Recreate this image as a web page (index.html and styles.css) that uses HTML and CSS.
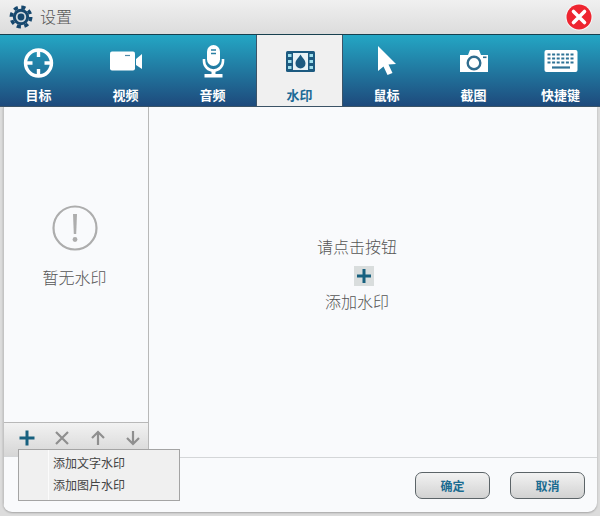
FILE: index.html
```html
<!DOCTYPE html>
<html lang="zh-CN">
<head>
    <meta charset="UTF-8">
    <meta name="viewport" content="width=device-width, initial-scale=1.0">
    <title>设置</title>
    <link rel="stylesheet" href="styles.css">
</head>
<body>

<header class="titlebar">
    <svg class="gear" width="26" height="26" viewBox="0 0 26 26">
        <circle cx="13" cy="13" r="9.8" fill="none" stroke="#17486e" stroke-width="3.4" stroke-dasharray="4.2 3.5"/>
        <circle cx="13" cy="13" r="8.2" fill="#17486e"/>
        <circle cx="13" cy="13" r="5.2" fill="#cfd8de"/>
        <circle cx="13" cy="13" r="3.4" fill="#17486e"/>
    </svg>
    <span class="title">设置</span>
    <svg class="close" width="28" height="28" viewBox="0 0 28 28">
        <circle cx="14" cy="14" r="13.5" fill="#f6f6f6"/>
        <circle cx="14" cy="14" r="12.5" fill="#ee2530"/>
        <path d="M8.5 8.5 L19.5 19.5 M19.5 8.5 L8.5 19.5" stroke="#fff" stroke-width="3.6" stroke-linecap="round"/>
    </svg>
</header>

<nav class="tabs">
    <div class="tab">
        <svg width="40" height="36" viewBox="0 0 40 36">
            <circle cx="19.5" cy="18" r="13" fill="none" stroke="#fff" stroke-width="3.4"/>
            <path d="M19.5 5 V12 M19.5 24 V31 M6.5 18 H13.5 M25.5 18 H32.5" stroke="#fff" stroke-width="3.4"/>
        </svg>
        <span>目标</span>
    </div>
    <div class="tab">
        <svg width="40" height="36" viewBox="0 0 40 36">
            <path d="M6 6.5 H27 Q29 6.5 29 8.5 V23.5 Q29 25.5 27 25.5 H6 Q4 25.5 4 23.5 V8.5 Q4 6.5 6 6.5 Z" fill="#fff"/>
            <path d="M19 10.5 H24" stroke="#4f8aa8" stroke-width="1.2"/>
            <path d="M30 14 L36 9 V24 L30 20 Z" fill="#fff"/>
        </svg>
        <span>视频</span>
    </div>
    <div class="tab">
        <svg width="40" height="36" viewBox="0 0 40 36">
            <rect x="14" y="0" width="13" height="21" rx="6.5" fill="#fff"/>
            <path d="M18 5 H23 M18 8.5 H23" stroke="#2a7fa3" stroke-width="1.4"/>
            <path d="M11 14 V16 A9.5 9.5 0 0 0 30 16 V14" fill="none" stroke="#fff" stroke-width="2.6"/>
            <path d="M20.5 26 V30" stroke="#fff" stroke-width="4"/>
            <rect x="11.5" y="29" width="18" height="3.5" fill="#fff"/>
        </svg>
        <span>音频</span>
    </div>
    <div class="tab active">
        <svg width="40" height="36" viewBox="0 0 40 36">
            <rect x="6" y="6" width="29" height="21" rx="1.5" fill="#1c5a80"/>
            <rect x="13" y="8" width="15" height="17" fill="#e8f2f6"/>
            <path d="M8 9 H11.5 V12 H8 Z M8 15 H11.5 V18 H8 Z M8 21 H11.5 V24 H8 Z M29.5 9 H33 V12 H29.5 Z M29.5 15 H33 V18 H29.5 Z M29.5 21 H33 V24 H29.5 Z" fill="#9fe0ee"/>
            <path d="M20.5 9.5 C22.5 13 25.5 15 25.5 18.5 A5 5 0 0 1 15.5 18.5 C15.5 15 18.5 13 20.5 9.5 Z" fill="#1c5a80"/>
        </svg>
        <span>水印</span>
    </div>
    <div class="tab">
        <svg width="40" height="36" viewBox="0 0 40 36">
            <path d="M11 1 L29 19 L21.5 19.5 L25.5 28 L20.5 30 L16.5 21.5 L11 26 Z" fill="#fff"/>
        </svg>
        <span>鼠标</span>
    </div>
    <div class="tab">
        <svg width="40" height="36" viewBox="0 0 40 36">
            <path d="M6 10 H14 L16 5 H25 L27 10 H34 V27 H6 Z" fill="#fff"/>
            <circle cx="20" cy="18" r="6.3" fill="#fff" stroke="#2f6d8f" stroke-width="2.4"/>
            <rect x="29" y="11.5" width="3.5" height="1.6" fill="#2f6d8f"/>
        </svg>
        <span>截图</span>
    </div>
    <div class="tab">
        <svg width="40" height="36" viewBox="0 0 40 36">
            <rect x="3.5" y="5" width="33" height="22" rx="2" fill="#fff"/>
            <path d="M6.5 9.5 H34 M6.5 13.5 H34 M6.5 17.5 H34" stroke="#2f7396" stroke-width="2.2" stroke-dasharray="3 1.6"/>
            <path d="M11 22.5 H29" stroke="#2f7396" stroke-width="2.2"/>
        </svg>
        <span>快捷键</span>
    </div>
</nav>

<main class="content">
    <aside class="sidebar">
        <div class="empty">
            <svg width="46" height="46" viewBox="0 0 46 46">
                <circle cx="23" cy="23" r="21.5" fill="none" stroke="#adadad" stroke-width="2.2"/>
                <path d="M21 9 H25 L24.2 29 H21.8 Z" fill="#adadad"/>
                <circle cx="23" cy="34.5" r="2.4" fill="#adadad"/>
            </svg>
            <p>暂无水印</p>
        </div>
        <div class="toolbar">
            <svg width="20" height="20" viewBox="0 0 20 20"><path d="M10 2.5 V17.5 M2.5 10 H17.5" stroke="#17607f" stroke-width="3"/></svg>
            <svg width="20" height="20" viewBox="0 0 20 20"><path d="M4 4 L16 16 M16 4 L4 16" stroke="#8f8f8f" stroke-width="2.2"/></svg>
            <svg width="20" height="20" viewBox="0 0 20 20"><path d="M10 17 V4 M4 10 L10 4 L16 10" fill="none" stroke="#8f8f8f" stroke-width="2.2"/></svg>
            <svg width="20" height="20" viewBox="0 0 20 20"><path d="M10 3 V16 M4 10 L10 16 L16 10" fill="none" stroke="#8f8f8f" stroke-width="2.2"/></svg>
        </div>
        <div class="sidebar-foot"></div>
    </aside>
    <section class="panel">
        <div class="hint">
            <p>请点击按钮</p>
            <div class="add-btn">
                <svg width="16" height="16" viewBox="0 0 16 16"><path d="M8 1 V15 M1 8 H15" stroke="#17607f" stroke-width="3"/></svg>
            </div>
            <p>添加水印</p>
        </div>
        <footer class="actions">
            <button class="btn">确定</button>
            <button class="btn">取消</button>
        </footer>
    </section>
</main>

<div class="menu">
    <div class="menu-item">添加文字水印</div>
    <div class="menu-item">添加图片水印</div>
</div>

</body>
</html>
```

FILE: styles.css
```css
body {
    margin: 0;
    width: 600px;
    height: 516px;
    overflow: hidden;
    position: relative;
    display: flex;
    flex-direction: column;
    background-color: #dcdcdc;
    font-family: "Noto Sans CJK SC", "Liberation Sans", sans-serif;
    color: #555;
}
p {
    margin: 0;
}
.titlebar {
    height: 34px;
    flex: none;
    display: flex;
    align-items: center;
    padding-left: 8px;
    background: linear-gradient(to bottom, #f0f0f0, #dcdcdc);
}
.title {
    margin: -2px 0 0 6px;
    font-size: 16px;
    font-weight: 300;
    color: #555;
}
.close {
    margin-left: auto;
    margin-right: 7px;
}
.tabs {
    height: 71px;
    flex: none;
    display: flex;
    border-top: 1px solid #17404f;
    border-bottom: 1px solid #3c5468;
    overflow: hidden;
    background: linear-gradient(to bottom, #24a6c4, #1e4a7c);
}
.tab {
    width: 87px;
    flex: none;
    display: flex;
    flex-direction: column;
    align-items: center;
    padding-top: 10px;
    box-sizing: border-box;
    color: #fff;
    font-size: 13px;
    font-weight: 700;
}
.tab:first-child {
    margin-left: -5px;
}
.tab span {
    line-height: 18px;
    margin-top: 5px;
}
.active {
    background-color: #f0f0f0;
    color: #1c6a96;
    border-left: 1px solid #3c5468;
    border-right: 1px solid #3c5468;
}
.content {
    flex: 1;
    display: flex;
    margin: 0 3px 4px 3px;
    background-color: #f9fafc;
    border-radius: 0 0 9px 9px;
    box-shadow: 0 1px 2px rgba(0, 0, 0, 0.25);
    overflow: hidden;
}
.sidebar {
    width: 146px;
    flex: none;
    box-sizing: border-box;
    display: flex;
    flex-direction: column;
    border-left: 1px solid #c4c4c4;
}
.empty {
    flex: 1;
    display: flex;
    flex-direction: column;
    align-items: center;
    padding: 98px 3px 0 0;
    font-size: 16px;
    font-weight: 300;
    color: #555;
    border-right: 1px solid #b8b8b8;
}
.empty p {
    margin-top: 14px;
    line-height: 24px;
}
.toolbar {
    height: 34px;
    box-sizing: border-box;
    display: flex;
    align-items: center;
    gap: 15.3px;
    padding: 0 0 4px 13px;
    border-top: 1px solid #b8b8b8;
    border-right: 1px solid #b8b8b8;
    background: linear-gradient(to bottom, #f2f2f2, #d6d6d6);
}
.sidebar-foot {
    height: 55px;
    border-top: 1px solid #d4d6d8;
}
.panel {
    flex: 1;
    display: flex;
    flex-direction: column;
}
.hint {
    flex: 1;
    display: flex;
    flex-direction: column;
    align-items: center;
    padding: 127px 32px 0 0;
    font-size: 16px;
    font-weight: 300;
    color: #555;
}
.hint p {
    line-height: 24px;
}
.add-btn {
    width: 20px;
    height: 20px;
    margin: 8px 0 3px 14px;
    display: flex;
    align-items: center;
    justify-content: center;
    background-color: #d9dddd;
}
.actions {
    height: 55px;
    box-sizing: border-box;
    display: flex;
    justify-content: flex-end;
    align-items: flex-start;
    gap: 20px;
    padding: 14px 12px 0 0;
    border-top: 1px solid #d4d6d8;
}
.btn {
    width: 75px;
    height: 27px;
    padding: 0;
    border: 1px solid #5c6468;
    border-radius: 7px;
    background: linear-gradient(to bottom, #f2f2f2, #d2d2d2);
    color: #1a6b90;
    font-family: inherit;
    font-size: 12px;
    font-weight: 700;
}
.menu {
    position: absolute;
    left: 18px;
    top: 449px;
    width: 160px;
    height: 48px;
    padding-top: 2px;
    border: 1px solid #a4a4a4;
    background: linear-gradient(to right, #f0f0f0 29px, #fbfbfb 29px, #fbfbfb 30px, #f0f0f0 30px);
}
.menu-item {
    height: 22px;
    line-height: 22px;
    padding-left: 34px;
    font-size: 12px;
    color: #444;
}
```
